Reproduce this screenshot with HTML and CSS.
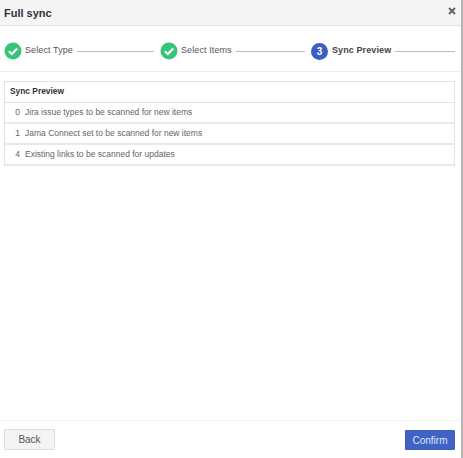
FILE: index.html
```html
<!DOCTYPE html>
<html lang="en">
<head>
    <meta charset="UTF-8">
    <title>Full sync</title>
    <link rel="stylesheet" href="styles.css">
</head>
<body>
    <div class="dialog">
        <div class="dialog-header">
            <h1 class="dialog-title">Full sync</h1>
            <svg class="close-icon" width="8" height="8" viewBox="0 0 8 8">
                <path d="M1 1 L7 7 M7 1 L1 7" stroke="#666" stroke-width="2" fill="none"/>
            </svg>
        </div>

        <div class="steps">
            <div class="step step-one">
                <svg class="check-icon" width="18" height="18" viewBox="0 0 18 18">
                    <circle cx="9" cy="9" r="8.5" fill="#36c578"/>
                    <path d="M4.8 9.2 L7.8 12 L13.2 6.4" stroke="#fff" stroke-width="2.2" fill="none"/>
                </svg>
                <span class="step-label">Select Type</span>
                <span class="step-line"></span>
            </div>
            <div class="step step-two">
                <svg class="check-icon" width="18" height="18" viewBox="0 0 18 18">
                    <circle cx="9" cy="9" r="8.5" fill="#36c578"/>
                    <path d="M4.8 9.2 L7.8 12 L13.2 6.4" stroke="#fff" stroke-width="2.2" fill="none"/>
                </svg>
                <span class="step-label">Select Items</span>
                <span class="step-line"></span>
            </div>
            <div class="step step-three">
                <span class="step-number">3</span>
                <span class="step-label step-active">Sync Preview</span>
                <span class="step-line"></span>
            </div>
        </div>

        <div class="dialog-body">
            <div class="preview-table">
                <div class="preview-head">Sync Preview</div>
                <div class="preview-row"><span class="count">0</span>Jira issue types to be scanned for new items</div>
                <div class="preview-row"><span class="count">1</span>Jama Connect set to be scanned for new items</div>
                <div class="preview-row"><span class="count">4</span>Existing links to be scanned for updates</div>
            </div>
        </div>

        <div class="dialog-footer">
            <button class="btn btn-back">Back</button>
            <button class="btn btn-confirm">Confirm</button>
        </div>
    </div>
</body>
</html>
```

FILE: styles.css
```css
html, body {
    margin: 0;
    height: 100%;
    background-color: #fff;
}

body {
    font-family: "Liberation Sans", Arial, sans-serif;
    font-size: 9px;
    color: #555;
    overflow: hidden;
}

.dialog {
    width: 461px;
    height: 458px;
    border-right: 2px solid #b5b5b5;
    display: flex;
    flex-direction: column;
    background-color: #fff;
}

.dialog-header {
    height: 25px;
    flex-shrink: 0;
    background-color: #f5f5f5;
    border-bottom: 1px solid #e2e2e2;
    display: flex;
    align-items: center;
    justify-content: space-between;
    padding: 0 5px 0 4px;
}

.dialog-title {
    margin: 0;
    font-size: 11px;
    font-weight: bold;
    color: #333;
}

.close-icon {
    margin-bottom: 4px;
}

.steps {
    height: 46px;
    box-sizing: border-box;
    flex-shrink: 0;
    border-bottom: 1px solid #eee;
    display: flex;
    align-items: center;
    padding: 5px 6px 0 4px;
}

.step {
    display: flex;
    align-items: center;
}

.step-one {
    width: 156px;
}

.step-two {
    width: 151px;
}

.step-three {
    flex: 1;
}

.step-label {
    margin-left: 3px;
    white-space: nowrap;
    letter-spacing: 0.1px;
    position: relative;
    top: -1px;
}

.step-active {
    margin-left: 4px;
    font-weight: bold;
    color: #444;
}

.step-line {
    flex: 1;
    height: 1px;
    background-color: #bbb;
    margin: 0 0 0 4px;
}

.step-one .step-line,
.step-two .step-line {
    margin-right: 6px;
}

.step-number {
    width: 17px;
    height: 17px;
    border-radius: 50%;
    background-color: #3a5fc0;
    color: #fff;
    font-size: 10px;
    font-weight: bold;
    display: flex;
    align-items: center;
    justify-content: center;
}

.dialog-body {
    flex: 1;
    padding: 9px 6px 0 4px;
}

.preview-table {
    border: 1px solid #e3e3e8;
    border-bottom: none;
}

.preview-head {
    height: 20px;
    line-height: 19px;
    padding-left: 5px;
    font-weight: bold;
    font-size: 8.4px;
    color: #333;
    border-bottom: 1px solid #e3e3e8;
}

.preview-row {
    height: 19px;
    line-height: 18px;
    font-size: 8.5px;
    color: #666;
    border-bottom: 2px solid #e8e8ee;
}

.count {
    display: inline-block;
    width: 20px;
    padding-right: 5px;
    box-sizing: border-box;
    text-align: right;
}

.dialog-footer {
    height: 38px;
    box-sizing: border-box;
    flex-shrink: 0;
    border-top: 1px solid #f3f3f3;
    display: flex;
    justify-content: space-between;
    align-items: flex-start;
    padding: 8px 6px 0 4px;
}

.btn {
    font-family: inherit;
    font-size: 10px;
    border-radius: 1px;
    padding: 0;
    height: 21px;
}

.btn-back {
    width: 51px;
    background-color: #f4f4f4;
    border: 1px solid #ddd;
    color: #555;
}

.btn-confirm {
    width: 50px;
    margin-top: 1px;
    height: 20px;
    background-color: #3f62c4;
    border: 1px solid #3a5cba;
    color: #dfe6fa;
}
```
